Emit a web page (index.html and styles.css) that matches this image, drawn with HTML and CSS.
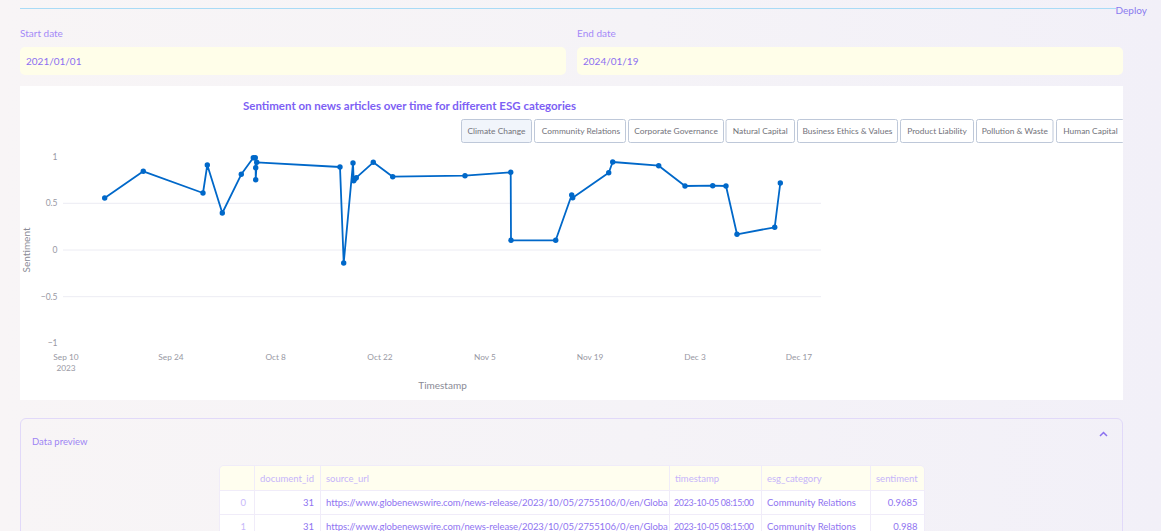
FILE: index.html
```html
<!DOCTYPE html>
<html lang="en">
<head>
<meta charset="utf-8">
<title>ESG Sentiment</title>
<link rel="stylesheet" href="styles.css">
</head>
<body>
<div class="app">
  <header class="topbar">
    <div class="rule"></div>
    <span class="deploy">Deploy</span>
  </header>
  <main class="main">
    <section class="dates">
      <div class="field">
        <label class="field-label">Start date</label>
        <div class="date-input">2021/01/01</div>
      </div>
      <div class="field">
        <label class="field-label">End date</label>
        <div class="date-input">2024/01/19</div>
      </div>
    </section>

    <section class="chart-card">
      <svg class="chart" width="1103" height="314" viewBox="0 0 1103 314" xmlns="http://www.w3.org/2000/svg">
        <text class="chart-title" x="223" y="23.5" textLength="333" lengthAdjust="spacingAndGlyphs">Sentiment on news articles over time for different ESG categories</text>

        <g class="buttons">
          <rect class="btn active" x="441.5" y="33.5" width="70" height="23" rx="2"/>
          <rect class="btn" x="514.5" y="33.5" width="91" height="23" rx="2"/>
          <rect class="btn" x="608.5" y="33.5" width="95" height="23" rx="2"/>
          <rect class="btn" x="706" y="33.5" width="68.5" height="23" rx="2"/>
          <rect class="btn" x="777.5" y="33.5" width="100" height="23" rx="2"/>
          <rect class="btn" x="880.5" y="33.5" width="73" height="23" rx="2"/>
          <rect class="btn" x="956.5" y="33.5" width="76.5" height="23" rx="2"/>
          <rect class="btn" x="1036.5" y="33.5" width="68" height="23" rx="2"/>
          <text class="btn-label" x="476.5" y="48">Climate Change</text>
          <text class="btn-label" x="561" y="48">Community Relations</text>
          <text class="btn-label" x="656" y="48">Corporate Governance</text>
          <text class="btn-label" x="740.3" y="48">Natural Capital</text>
          <text class="btn-label" x="827.5" y="48">Business Ethics &amp; Values</text>
          <text class="btn-label" x="917" y="48">Product Liability</text>
          <text class="btn-label" x="994.8" y="48">Pollution &amp; Waste</text>
          <text class="btn-label" x="1070.5" y="48">Human Capital</text>
        </g>

        <g class="grid">
          <line x1="43" y1="117.3" x2="801" y2="117.3"/>
          <line x1="43" y1="164" x2="801" y2="164"/>
          <line x1="43" y1="210.7" x2="801" y2="210.7"/>
        </g>

        <g class="ytick">
          <text x="37.5" y="73.7">1</text>
          <text x="37.5" y="120.3">0.5</text>
          <text x="37.5" y="167">0</text>
          <text x="37.5" y="213.7">−0.5</text>
          <text x="37.5" y="260.3">−1</text>
        </g>

        <g class="xtick">
          <text x="46" y="274">Sep 10</text>
          <text x="46" y="285">2023</text>
          <text x="151" y="274">Sep 24</text>
          <text x="255.7" y="274">Oct 8</text>
          <text x="360" y="274">Oct 22</text>
          <text x="465" y="274">Nov 5</text>
          <text x="570" y="274">Nov 19</text>
          <text x="675" y="274">Dec 3</text>
          <text x="779" y="274">Dec 17</text>
        </g>

        <text class="axis-title" x="422.5" y="302.5">Timestamp</text>
        <text class="axis-title" transform="translate(9.8 164) rotate(-90)">Sentiment</text>

        <polyline class="series" points="84.7,112 123.3,85.3 183,107 187.3,79 202.3,127 221.3,88.3 233.3,71.7 235.3,71.7 235.7,81.7 235.7,93.7 236.7,76.3 320,81 323.7,177 333,77 333.7,94.7 334.7,93 336.3,91.7 353.3,76.3 372.7,90.7 445,89.7 490.7,86.3 491,154.3 535.7,154.3 551.7,109 552.7,111.7 588.7,86.7 592.7,76 638.7,79.7 665,100 692.7,99.7 706,100 717,148.3 754.7,141.3 760.3,97"/>
        <g class="markers">
          <circle cx="84.7" cy="112" r="2.7"/>
          <circle cx="123.3" cy="85.3" r="2.7"/>
          <circle cx="183" cy="107" r="2.7"/>
          <circle cx="187.3" cy="79" r="2.7"/>
          <circle cx="202.3" cy="127" r="2.7"/>
          <circle cx="221.3" cy="88.3" r="2.7"/>
          <circle cx="233.3" cy="71.7" r="2.7"/>
          <circle cx="235.3" cy="71.7" r="2.7"/>
          <circle cx="235.7" cy="81.7" r="2.7"/>
          <circle cx="235.7" cy="93.7" r="2.7"/>
          <circle cx="236.7" cy="76.3" r="2.7"/>
          <circle cx="320" cy="81" r="2.7"/>
          <circle cx="323.7" cy="177" r="2.7"/>
          <circle cx="333" cy="77" r="2.7"/>
          <circle cx="333.7" cy="94.7" r="2.7"/>
          <circle cx="334.7" cy="93" r="2.7"/>
          <circle cx="336.3" cy="91.7" r="2.7"/>
          <circle cx="353.3" cy="76.3" r="2.7"/>
          <circle cx="372.7" cy="90.7" r="2.7"/>
          <circle cx="445" cy="89.7" r="2.7"/>
          <circle cx="490.7" cy="86.3" r="2.7"/>
          <circle cx="491" cy="154.3" r="2.7"/>
          <circle cx="535.7" cy="154.3" r="2.7"/>
          <circle cx="551.7" cy="109" r="2.7"/>
          <circle cx="552.7" cy="111.7" r="2.7"/>
          <circle cx="588.7" cy="86.7" r="2.7"/>
          <circle cx="592.7" cy="76" r="2.7"/>
          <circle cx="638.7" cy="79.7" r="2.7"/>
          <circle cx="665" cy="100" r="2.7"/>
          <circle cx="692.7" cy="99.7" r="2.7"/>
          <circle cx="706" cy="100" r="2.7"/>
          <circle cx="717" cy="148.3" r="2.7"/>
          <circle cx="754.7" cy="141.3" r="2.7"/>
          <circle cx="760.3" cy="97" r="2.7"/>
        </g>
      </svg>
    </section>

    <section class="expander">
      <div class="exp-head">
        <span class="exp-title">Data preview</span>
        <svg class="chev" width="9" height="6" viewBox="0 0 9 6" xmlns="http://www.w3.org/2000/svg"><polyline points="1,5 4.5,1.5 8,5"/></svg>
      </div>
      <div class="table-wrap">
        <table class="df">
          <colgroup>
            <col class="c-idx"><col class="c-doc"><col class="c-url"><col class="c-ts"><col class="c-cat"><col class="c-sent">
          </colgroup>
          <thead>
            <tr><th></th><th>document_id</th><th>source_url</th><th>timestamp</th><th>esg_category</th><th>sentiment</th></tr>
          </thead>
          <tbody>
            <tr>
              <td class="idx">0</td><td class="num">31</td>
              <td class="url">https://www.globenewswire.com/news-release/2023/10/05/2755106/0/en/Globa</td>
              <td class="ts">2023-10-05 08:15:00</td><td>Community Relations</td><td class="num">0.9685</td>
            </tr>
            <tr>
              <td class="idx">1</td><td class="num">31</td>
              <td class="url">https://www.globenewswire.com/news-release/2023/10/05/2755106/0/en/Globa</td>
              <td class="ts">2023-10-05 08:15:00</td><td>Community Relations</td><td class="num">0.988</td>
            </tr>
          </tbody>
        </table>
      </div>
    </section>
  </main>
</div>
</body>
</html>
```

FILE: styles.css
```css
html, body {
  margin: 0;
  padding: 0;
}

body {
  font-family: "Lato", "Open Sans", sans-serif;
  overflow: hidden;
}

.app {
  min-height: 100vh;
  background: linear-gradient(90deg, #f8f5f6 0%, #f5f3f7 55%, #f2f0f8 100%);
}

.topbar {
  display: flex;
  align-items: center;
  height: 18px;
  padding: 0 14px 0 20px;
}

.rule {
  flex: 1;
  height: 1px;
  background: #a9dbf6;
  margin-top: -1px;
}

.deploy {
  font-size: 10px;
  color: #8b7bef;
  line-height: 12px;
  margin-top: 1px;
}

.main {
  padding: 0 38px 20px 20px;
}

.dates {
  display: grid;
  grid-template-columns: 1fr 1fr;
  column-gap: 11px;
}

.field {
  display: flex;
  flex-direction: column;
}

.field-label {
  font-size: 10px;
  line-height: 14px;
  color: #a48af7;
  margin: 8px 0 7px;
}

.date-input {
  height: 28px;
  line-height: 28px;
  background: #fffee9;
  border-radius: 5px;
  padding-left: 6px;
  font-size: 10px;
  color: #8d6ff1;
}

.chart-card {
  margin-top: 11px;
  height: 314px;
  background: #ffffff;
}

.chart {
  display: block;
  font-family: "Lato", "Open Sans", sans-serif;
}

.chart-title {
  font-size: 11.5px;
  font-weight: 700;
  fill: #7d5ff4;
}

.btn {
  fill: #ffffff;
  stroke: #bec8d9;
  stroke-width: 1;
}

.btn.active {
  fill: #f1f5fb;
}

.btn-label {
  font-size: 8.4px;
  fill: #72727a;
  text-anchor: middle;
}

.grid line {
  stroke: #ececf3;
  stroke-width: 1;
}

.ytick text {
  font-size: 8.5px;
  fill: #9898a3;
  text-anchor: end;
}

.xtick text {
  font-size: 8.3px;
  fill: #9898a3;
  text-anchor: middle;
}

.axis-title {
  font-size: 10px;
  fill: #8a8a95;
  text-anchor: middle;
}

.series {
  fill: none;
  stroke: #0068c9;
  stroke-width: 1.8;
  stroke-linejoin: round;
}

.markers circle {
  fill: #0068c9;
}

.expander {
  margin-top: 18px;
  border: 1px solid #e1d9f9;
  border-radius: 6px;
  padding-bottom: 24px;
}

.exp-head {
  display: flex;
  justify-content: space-between;
  align-items: flex-start;
  padding: 16px 14px 0 11px;
}

.exp-title {
  font-size: 9.5px;
  line-height: 14px;
  color: #9d84f4;
}

.chev {
  margin-top: -4px;
}

.chev polyline {
  fill: none;
  stroke: #8a70ef;
  stroke-width: 1.5;
}

.table-wrap {
  width: 706px;
  margin: 16px auto 0;
  border: 1px solid #f0ecf9;
  border-radius: 5px 5px 0 0;
  overflow: hidden;
  box-sizing: border-box;
}

.df {
  width: 100%;
  table-layout: fixed;
  border-collapse: collapse;
  font-size: 9.5px;
}

.c-idx { width: 35px; }
.c-doc { width: 66px; }
.c-url { width: 349px; }
.c-ts { width: 92px; }
.c-cat { width: 109px; }
.c-sent { width: 53px; }

.df th,
.df td {
  height: 23px;
  padding: 0 5px;
  white-space: nowrap;
  overflow: hidden;
  text-overflow: clip;
  border-right: 1px solid #f0ecf9;
  border-bottom: 1px solid #f0ecf9;
  text-align: left;
  font-weight: 400;
}

.df thead th {
  height: 24px;
}

.df th:last-child,
.df td:last-child {
  border-right: none;
}

.df thead th {
  background: #fffeef;
  color: #c6b5fa;
}

.df tbody td {
  background: #ffffff;
  color: #8f74f1;
}

.df td.num {
  text-align: right;
  padding-right: 6px;
}

.df td.idx {
  text-align: right;
  padding-right: 8px;
  color: #c7b8fa;
}

.df td.url {
  letter-spacing: -0.1px;
}

.df td.ts {
  font-size: 8.9px;
  letter-spacing: -0.3px;
  padding-left: 4px;
  padding-right: 2px;
}
```
